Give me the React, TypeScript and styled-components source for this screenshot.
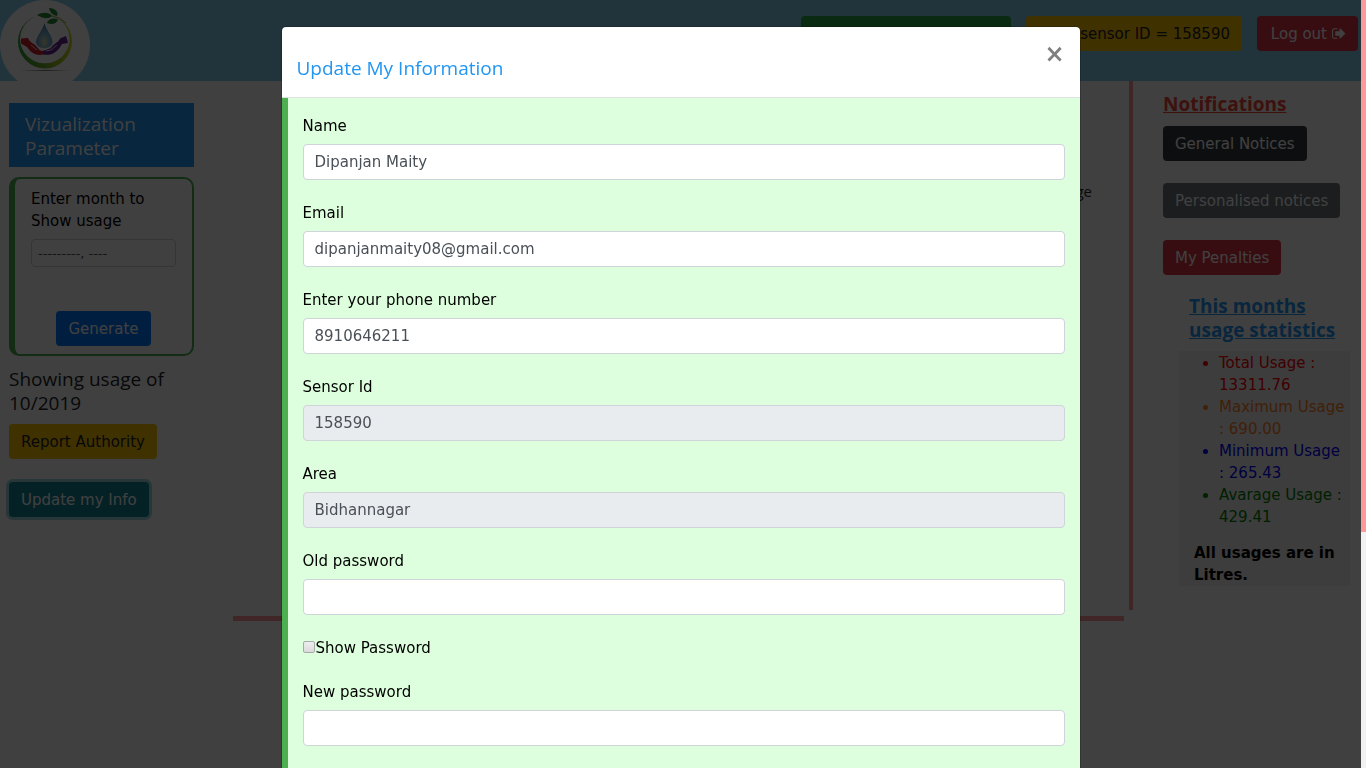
import React from "react";
import styled, { createGlobalStyle } from "styled-components";

const GlobalStyle = createGlobalStyle`
  *, *::before, *::after { box-sizing: border-box; }
  body {
    margin: 0;
    background: #fff;
    color: #000;
    font: 15px/22px Verdana, "DejaVu Sans", sans-serif;
    overflow: hidden;
  }
  h4, p, ul { margin: 0; }
`;

const HEADING_FONT = `"Segoe UI", "Open Sans", sans-serif`;

const Page = styled.div`
  min-height: 100vh;
  padding-right: 5px;
`;

const Header = styled.header`
  display: flex;
  justify-content: space-between;
  align-items: flex-start;
  height: 81px;
  padding-right: 3px;
  background: skyblue;
`;

const Logo = styled.svg`
  display: block;
  flex: none;
  width: 90px;
  height: 90px;
`;

const HeaderActions = styled.div`
  display: flex;
  gap: 15px;
  padding-top: 16px;
`;

const tones = {
  green: ["#28a745", "#fff"],
  yellow: ["#ffc107", "#212529"],
  red: ["#dc3545", "#fff"],
  blue: ["#007bff", "#fff"],
  dark: ["#343a40", "#fff"],
  grey: ["#6c757d", "#fff"],
  teal: ["#138496", "#fff"],
};

const Button = styled.button<{ $tone: keyof typeof tones; $width?: number; $ring?: boolean }>`
  display: inline-flex;
  align-items: center;
  justify-content: flex-end;
  gap: 5px;
  width: ${(p) => (p.$width ? `${p.$width}px` : "auto")};
  height: 35px;
  padding: 0 12px;
  border: 0;
  border-radius: 4px;
  background: ${(p) => tones[p.$tone][0]};
  color: ${(p) => tones[p.$tone][1]};
  font: inherit;
  white-space: nowrap;
  box-shadow: ${(p) => (p.$ring ? "0 0 0 3px rgba(58, 176, 195, 0.5)" : "none")};
`;

const Columns = styled.div`
  display: grid;
  grid-template-columns: 233px 1fr 228px;
`;

const LeftColumn = styled.aside`
  display: flex;
  flex-direction: column;
  align-items: flex-start;
  width: 194px;
  padding: 22px 0 0 9px;
`;

const Heading = styled.h4<{ $color?: string; $bold?: boolean }>`
  color: ${(p) => p.$color || "#212529"};
  font: ${(p) => (p.$bold ? 700 : 400)} 19px/24px ${HEADING_FONT};
  text-decoration: ${(p) => (p.$bold ? "underline" : "none")};
`;

const Banner = styled.div`
  width: 100%;
  padding: 9px 16px 7px;
  background: #2196f3;
`;

const MonthCard = styled.form`
  display: flex;
  flex-direction: column;
  width: 100%;
  margin: 10px 0 11px;
  padding: 9px 16px 8px;
  border: 2px solid #4caf50;
  border-left-width: 6px;
  border-radius: 10px;
`;

const MonthInput = styled.input`
  width: 100%;
  height: 28px;
  margin: 7px 0 44px;
  padding: 0 6px;
  border: 1px solid #ced4da;
  border-radius: 4px;
  background: #fff;
  color: #495057;
  font: 13px/20px Verdana, "DejaVu Sans", sans-serif;
`;

const Centered = styled.div`
  display: flex;
  justify-content: center;
`;

const LeftActions = styled.div`
  display: flex;
  flex-direction: column;
  align-items: flex-start;
  gap: 23px;
  margin-top: 9px;
`;

const Main = styled.main`
  display: grid;
  grid-template-columns: 1fr 5px 4px;
  grid-template-rows: 529px 6px 5px;
`;

const Legend = styled.p`
  grid-column: 1 / 3;
  padding: 99px 37px 0 0;
  color: #212529;
  font: 15px/22px ${HEADING_FONT};
  text-align: right;
`;

const SideRail = styled.div`
  grid-column: 3;
  grid-row: 1;
  background: #ff9999;
`;

const BottomRail = styled.div`
  grid-column: 1;
  grid-row: 3;
  background: #ff9999;
`;

const RightColumn = styled.aside`
  padding: 11px 11px 0 30px;
`;

const NoticeList = styled.div`
  display: flex;
  flex-direction: column;
  align-items: flex-start;
  gap: 22px;
  padding: 10px 0 19px;
`;

const StatsHeading = styled.div`
  padding: 0 0 9px 26px;
`;

const Stats = styled.section`
  margin-left: 16px;
  background: #f1f1f1;
`;

const StatList = styled.ul`
  padding: 1px 4px 0 40px;
`;

const Stat = styled.li<{ $color: string }>`
  color: ${(p) => p.$color};
`;

const StatNote = styled.p`
  padding: 14px 10px 0 15px;
  font-weight: 700;
`;

const Backdrop = styled.div`
  position: fixed;
  inset: 0 5px 0 0;
  overflow: hidden;
  padding-top: 26px;
  background: rgba(0, 0, 0, 0.75);
`;

const Dialog = styled.section`
  width: 100%;
  max-width: 800px;
  margin: 0 auto;
  border: 1px solid rgba(0, 0, 0, 0.2);
  border-radius: 5px;
  background: #fff;
  background-clip: padding-box;
`;

const DialogHeader = styled.header`
  display: flex;
  justify-content: space-between;
  align-items: flex-start;
  padding: 14px 15px 17px;
  border-bottom: 1px solid #dee2e6;
`;

const DialogTitle = styled(Heading)`
  padding-top: 15px;
`;

const CloseButton = styled.button`
  padding: 0;
  border: 0;
  background: none;
  color: #7f7f7f;
  font: 700 24px/26px Verdana, "DejaVu Sans", sans-serif;
`;

const DialogBody = styled.form`
  display: flex;
  flex-direction: column;
  gap: 22px;
  padding: 17px 15px 44px;
  border-left: 6px solid #4caf50;
  background: #ddffdd;
`;

const Field = styled.label`
  display: flex;
  flex-direction: column;
  gap: 7px;
`;

const TextInput = styled.input`
  width: 100%;
  height: 36px;
  padding: 0 11px;
  border: 1px solid #ced4da;
  border-radius: 4px;
  background: #fff;
  color: #495057;
  font: inherit;
  &:disabled { background: #e9ecef; }
`;

const CheckLabel = styled.label`
  display: flex;
  align-items: center;
`;

const CheckInput = styled.input`
  appearance: none;
  width: 12px;
  height: 12px;
  margin: 0 1px 2px 0;
  border: 1px solid #a9a9a9;
  border-radius: 2px;
  background: linear-gradient(#eee, #dadada);
`;

const ScrollTrack = styled.div`
  position: fixed;
  inset: 0 0 0 auto;
  width: 5px;
  background: #f1f1f1;
`;

const ScrollThumb = styled.div`
  height: 69.3%;
  background: #ff9999;
`;

const fields = [
  { label: "Name", value: "Dipanjan Maity" },
  { label: "Email", value: "dipanjanmaity08@gmail.com" },
  { label: "Enter your phone number", value: "8910646211" },
  { label: "Sensor Id", value: "158590", disabled: true },
  { label: "Area", value: "Bidhannagar", disabled: true },
];

const stats = [
  { text: "Total Usage : 13311.76", color: "red" },
  { text: "Maximum Usage : 690.00", color: "#ff7f27" },
  { text: "Minimum Usage : 265.43", color: "blue" },
  { text: "Avarage Usage : 429.41", color: "green" },
];

function SignOutIcon() {
  return (
    <svg width="14" height="15" viewBox="0 0 1664 1792" fill="currentColor" aria-hidden="true">
      <path d="M640 1440q0 4 1 20t.5 26.500-3 23.500-10 19.500-20.500 6.500h-320q-119 0-203.500-84.500t-84.500-203.500v-704q0-119 84.500-203.500t203.500-84.500h320q13 0 22.500 9.500t9.500 22.500q0 4 1 20t.5 26.500-3 23.500-10 19.500-20.500 6.500h-320q-66 0-113 47t-47 113v704q0 66 47 113t113 47h312l11.500 1 11.500 3 8 5.500 7 9 2 13.500zm928-544q0 26-19 45l-544 544q-19 19-45 19t-45-19-19-45v-288h-448q-26 0-45-19t-19-45v-384q0-26 19-45t45-19h448v-288q0-26 19-45t45-19 45 19l544 544q19 19 19 45z" />
    </svg>
  );
}

function WaterLogo() {
  return (
    <Logo viewBox="0 0 90 90" aria-hidden="true">
      <defs>
        <linearGradient id="ring" x1="0" x2="1">
          <stop offset="0" stopColor="#2f9e3a" />
          <stop offset="0.5" stopColor="#6fae2c" />
          <stop offset="1" stopColor="#d3d62a" />
        </linearGradient>
        <radialGradient id="drop" cx="0.5" cy="0.75" r="0.7">
          <stop offset="0" stopColor="#d8d8a0" />
          <stop offset="0.45" stopColor="#7fb2d2" />
          <stop offset="1" stopColor="#3f7fae" />
        </radialGradient>
        <radialGradient id="shade">
          <stop offset="0" stopColor="#777" />
          <stop offset="1" stopColor="#fff" />
        </radialGradient>
      </defs>
      <circle cx="45" cy="45" r="45" fill="#fff" />
      <ellipse cx="45" cy="70.5" rx="25" ry="1" fill="url(#shade)" />
      <path
        fillRule="evenodd"
        d="M18 41.500a27 27 0 1 0 54 0a27 27 0 1 0 -54 0ZM20 39a24.800 24.300 0 1 0 49.600 0a24.800 24.300 0 1 0 -49.600 0Z"
        fill="url(#ring)"
      />
      <path d="M35 12H56L58 19L54 24L46 21L34 19Z" fill="#fff" />
      <path d="M37 15C43 12 49 12 52 16C48 20 42 18 37 15ZM49 8C55 8 59 12 57 16C52 15 50 12 49 8ZM47 23C49 18 54 18 58 19C57 24 52 25 47 23Z" fill="#268a35" />
      <path d="M52 16Q60 17 66 23" fill="none" stroke="#7cb342" strokeWidth="1" />
      <path d="M44.500 23C43 30 36 36 36 42.500A8.500 7.500 0 0 0 52.500 42.500C52.500 36 46 30 44.500 23Z" fill="url(#drop)" />
      <path d="M21 38.500L28 38C30 43 34 43 37 47L40 50.500L44 51L43 54.500C36 56 31 53 27 47L21 43.500Z" fill="#d01f2c" />
      <path d="M68 43L66 36L60 38.500C58 43 54 43 51 48L43 51L43 54.500C51 56 57 53 62 44Z" fill="#6a2590" />
      <path d="M31 45L37 50M57 45L51 50L46 51" fill="none" stroke="#fff" strokeWidth="0.800" />
    </Logo>
  );
}

export default function App() {
  return (
    <>
      <GlobalStyle />
      <Page>
        <Header>
          <WaterLogo />
          <HeaderActions>
            <Button $tone="green" $width={210} aria-label="Account" />
            <Button $tone="yellow" $width={216}>sensor ID = 158590</Button>
            <Button $tone="red" $width={101}>Log out <SignOutIcon /></Button>
          </HeaderActions>
        </Header>
        <Columns>
          <LeftColumn>
            <Banner>
              <Heading $color="#fff">Vizualization Parameter</Heading>
            </Banner>
            <MonthCard>
              <label htmlFor="month">Enter month to Show usage</label>
              <MonthInput id="month" defaultValue="---------, ----" />
              <Centered>
                <Button type="button" $tone="blue">Generate</Button>
              </Centered>
            </MonthCard>
            <Heading>Showing usage of 10/2019</Heading>
            <LeftActions>
              <Button $tone="yellow">Report Authority</Button>
              <Button $tone="teal" $ring>Update my Info</Button>
            </LeftActions>
          </LeftColumn>
          <Main>
            <Legend>usage</Legend>
            <SideRail />
            <BottomRail />
          </Main>
          <RightColumn>
            <Heading $bold $color="#f44336">Notifications</Heading>
            <NoticeList>
              <Button $tone="dark">General Notices</Button>
              <Button $tone="grey">Personalised notices</Button>
              <Button $tone="red">My Penalties</Button>
            </NoticeList>
            <StatsHeading>
              <Heading $bold $color="#2196f3">This months usage statistics</Heading>
            </StatsHeading>
            <Stats>
              <StatList>
                {stats.map((s) => (
                  <Stat key={s.text} $color={s.color}>{s.text}</Stat>
                ))}
              </StatList>
              <StatNote>All usages are in Litres.</StatNote>
            </Stats>
          </RightColumn>
        </Columns>
      </Page>
      <Backdrop>
        <Dialog role="dialog" aria-modal="true" aria-labelledby="dialog-title">
          <DialogHeader>
            <DialogTitle id="dialog-title" $color="#2196f3">Update My Information</DialogTitle>
            <CloseButton type="button" aria-label="Close">×</CloseButton>
          </DialogHeader>
          <DialogBody>
            {fields.map((f) => (
              <Field key={f.label}>
                {f.label}
                <TextInput defaultValue={f.value} disabled={f.disabled} />
              </Field>
            ))}
            <Field>
              Old password
              <TextInput type="password" />
            </Field>
            <CheckLabel>
              <CheckInput type="checkbox" />
              Show Password
            </CheckLabel>
            <Field>
              New password
              <TextInput type="password" />
            </Field>
          </DialogBody>
        </Dialog>
      </Backdrop>
      <ScrollTrack>
        <ScrollThumb />
      </ScrollTrack>
    </>
  );
}
